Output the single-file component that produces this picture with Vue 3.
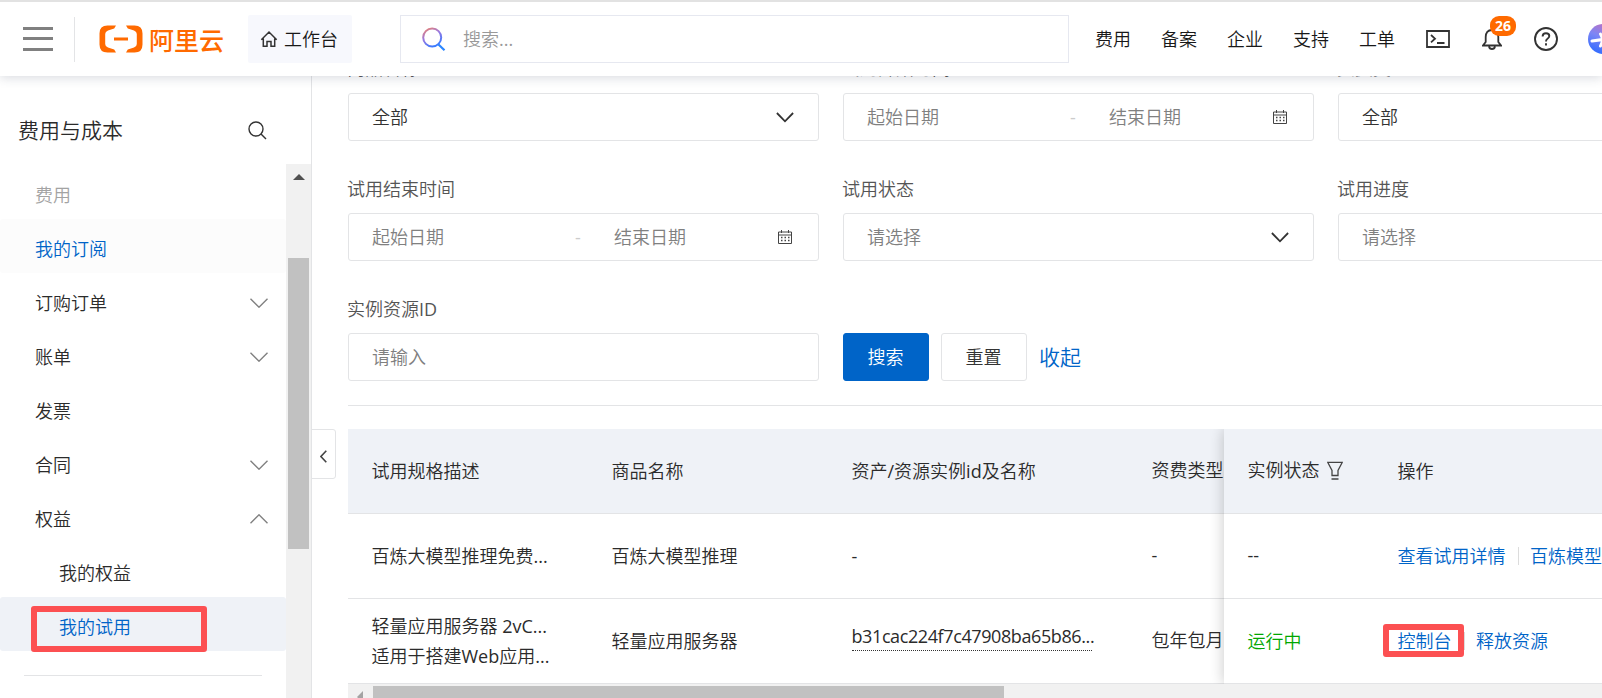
<template>
  <div class="console">
    <header class="topbar">
      <div class="menu-btn"><i></i><i></i><i></i></div>
      <div class="brand">
        <svg width="44" height="28" viewBox="0 0 44 28">
          <path
            d="M17 .5H8.500Q.5.5.5 8.500V19.500Q.5 27.500 8.500 27.500H17L15.200 24.500 9 22.600Q6.200 21.600 6.200 19V9Q6.200 6.400 9 5.400L15.200 3.500ZM27 .5H35.500Q43.500.5 43.500 8.500V19.500Q43.500 27.500 35.500 27.500H27L28.800 24.500 35 22.600Q37.800 21.600 37.800 19V9Q37.800 6.400 35 5.400L28.800 3.500ZM15 12.500H29V15.500H15Z"
            fill="#ff6a00"
          />
        </svg>
        <span>阿里云</span>
      </div>
      <div class="workbench">
        <svg width="18" height="18" viewBox="0 0 18 18" fill="none" stroke="#333" stroke-width="1.500">
          <path d="M1.300 9.700 9 2l7.700 7.700M3.300 8.500V16.200H7V11.500H11V16.200H14.700V8.500" />
        </svg>
        <span>工作台</span>
      </div>
      <div class="search">
        <svg width="24" height="24" viewBox="0 0 24 24" fill="none">
          <defs>
            <linearGradient id="lens" x1="0.1" y1="0" x2="0.6" y2="1">
              <stop offset="0" stop-color="#e98273" />
              <stop offset="0.450" stop-color="#9a78e0" />
              <stop offset="1" stop-color="#3a7bff" />
            </linearGradient>
          </defs>
          <circle cx="10.200" cy="10.500" r="9" stroke="url(#lens)" stroke-width="2" />
          <path d="M16.500 17.500 22.500 23.200" stroke="#2b86ff" stroke-width="2.200" />
        </svg>
        <span>搜索...</span>
      </div>
      <nav class="links">
        <a v-for="link in links" :key="link">{{ link }}</a>
      </nav>
      <div class="tools">
        <svg class="terminal" width="24" height="18" viewBox="0 0 24 18" fill="none" stroke="#333" stroke-width="1.800">
          <path d="M1 1H23V17H1ZM5 5 9 8.700 5 12.400M11 13H18.500" />
        </svg>
        <div class="bell">
          <svg width="20" height="22" viewBox="0 0 20 22" fill="none" stroke="#333" stroke-width="1.800">
            <path d="M1 17.500H19L16.300 14V9Q16.300 2 10 2 3.700 2 3.700 9V14ZM7 18.500Q7.500 21 10 21 12.500 21 13 18.500" />
          </svg>
          <b>26</b>
        </div>
        <svg class="help" width="24" height="24" viewBox="0 0 24 24" fill="none" stroke="#333" stroke-width="1.900">
          <circle cx="12" cy="12" r="11" />
          <path d="M8.600 9.600Q8.600 6.300 12 6.300 15.300 6.300 15.300 9.100 15.300 10.600 13.500 11.700 12 12.600 12 14.400M12 16.300V18.500" />
        </svg>
        <svg class="assistant" width="30" height="30" viewBox="0 0 30 30">
          <defs>
            <linearGradient id="orb" x1="0.700" y1="0" x2="0.300" y2="1">
              <stop offset="0" stop-color="#c06fc0" />
              <stop offset="0.450" stop-color="#7d86f5" />
              <stop offset="1" stop-color="#2f6bff" />
            </linearGradient>
          </defs>
          <circle cx="15" cy="15" r="15" fill="url(#orb)" />
          <path d="M4 17 26 14M12.500 10 18 22M19 7 12.500 22" stroke="#fff" stroke-width="3" stroke-linecap="round" />
        </svg>
      </div>
    </header>

    <div class="body">
      <aside class="sidebar">
        <div class="side-title">
          <span>费用与成本</span>
          <svg width="19" height="19" viewBox="0 0 19 19" fill="none" stroke="#333" stroke-width="1.400">
            <circle cx="8" cy="8" r="7" />
            <path d="M13 13 18 18" />
          </svg>
        </div>
        <div class="side-scroll">
          <div class="menu">
            <div v-for="item in menu" :key="item.text" class="menu-item" :class="item.type">
              <span>{{ item.text }}</span>
              <svg v-if="item.arrow" :class="item.arrow" width="18" height="10" viewBox="0 0 18 10" fill="none" stroke="#808080" stroke-width="1.400">
                <path d="M.5.7 9 9.200 17.500.7" />
              </svg>
              <i v-if="item.type === 'sub active'" class="mark"></i>
            </div>
            <div class="menu-line"></div>
          </div>
          <div class="v-scroll">
            <i class="up"></i>
            <div class="v-thumb"></div>
          </div>
        </div>
      </aside>

      <main class="content">
        <div class="collapse">
          <svg width="7" height="13" viewBox="0 0 7 13" fill="none" stroke="#444" stroke-width="1.600">
            <path d="M6.300.7.900 6.500 6.300 12.300" />
          </svg>
        </div>
        <div class="filters">
          <div v-for="field in fields" :key="field.label" class="field">
            <label>{{ field.label }}<em v-if="field.suffix">{{ field.suffix }}</em></label>
            <div class="control" :class="field.kind">
              <template v-if="field.kind === 'range'">
                <span class="start">起始日期</span>
                <span class="dash">-</span>
                <span class="end">结束日期</span>
                <svg width="14" height="14" viewBox="0 0 14 14" fill="none" stroke="#444" stroke-width="1">
                  <path d="M.5 2H13.500V13.500H.5ZM.5 5H13.500M3.500 0V3M10.500 0V3" />
                  <path d="M3 7.500H11.500M3 10.500H11.500" stroke-width="1.400" stroke-dasharray="1.500 2" />
                </svg>
              </template>
              <template v-else>
                <span :class="{ filled: field.value === '全部' }">{{ field.value }}</span>
                <svg v-if="field.kind === 'select'" width="18" height="11" viewBox="0 0 18 11" fill="none" stroke="#333" stroke-width="1.800">
                  <path d="M.9 1 9 9.300 17.100 1" />
                </svg>
              </template>
            </div>
          </div>
          <div class="actions">
            <button class="primary">搜索</button>
            <button>重置</button>
            <a>收起</a>
          </div>
        </div>

        <div class="table">
          <div class="scroll-cols">
            <div class="row head">
              <div>试用规格描述</div>
              <div>商品名称</div>
              <div>资产/资源实例<em>id</em>及名称</div>
              <div class="raised">资费类型</div>
            </div>
            <div v-for="row in rows" :key="row.product" class="row">
              <div class="desc"><p v-for="line in row.desc" :key="line">{{ line }}</p></div>
              <div>{{ row.product }}</div>
              <div><span :class="{ asset: row.asset !== '-' }">{{ row.asset }}</span></div>
              <div class="raised">{{ row.charge }}</div>
            </div>
          </div>
          <div class="fixed-cols">
            <div class="row head">
              <div class="raised">
                实例状态
                <svg width="16" height="19" viewBox="0 0 16 19" fill="none" stroke="#444" stroke-width="1.300">
                  <path d="M.7 1.300H15.300L11 9.500V14.500H5V9.500ZM4.500 18H11.500" />
                </svg>
              </div>
              <div>操作</div>
            </div>
            <div v-for="row in rows" :key="row.product" class="row">
              <div :class="row.status === '--' ? 'raised' : 'running'">{{ row.status }}</div>
              <div class="ops">
                <a>{{ row.ops[0] }}<i v-if="row.ops[0] === '控制台'" class="mark"></i></a>
                <i class="sep"></i>
                <a>{{ row.ops[1] }}</a>
              </div>
            </div>
          </div>
        </div>
        <div class="h-scroll">
          <i class="left"></i>
          <div class="h-thumb"></div>
        </div>
      </main>
    </div>
  </div>
</template>

<script setup>
const links = ['费用', '备案', '企业', '支持', '工单'];

const menu = [
  { text: '费用', type: 'group' },
  { text: '我的订阅', type: 'hover' },
  { text: '订购订单', arrow: 'down' },
  { text: '账单', arrow: 'down' },
  { text: '发票' },
  { text: '合同', arrow: 'down' },
  { text: '权益', arrow: 'flip' },
  { text: '我的权益', type: 'sub' },
  { text: '我的试用', type: 'sub active' },
];

const fields = [
  { label: '商品名称', kind: 'select', value: '全部' },
  { label: '试用开始时间', kind: 'range' },
  { label: '资费类型', kind: 'select', value: '全部' },
  { label: '试用结束时间', kind: 'range' },
  { label: '试用状态', kind: 'select', value: '请选择' },
  { label: '试用进度', kind: 'select', value: '请选择' },
  { label: '实例资源', suffix: 'ID', kind: 'input', value: '请输入' },
];

const rows = [
  {
    desc: ['百炼大模型推理免费...'],
    product: '百炼大模型推理',
    asset: '-',
    charge: '-',
    status: '--',
    ops: ['查看试用详情', '百炼模型广场'],
  },
  {
    desc: ['轻量应用服务器 2vC...', '适用于搭建Web应用...'],
    product: '轻量应用服务器',
    asset: 'b31cac224f7c47908ba65b86...',
    charge: '包年包月',
    status: '运行中',
    ops: ['控制台', '释放资源'],
  },
];
</script>

<style>
body {
  overflow: hidden;
}
</style>

<style scoped>
* {
  box-sizing: border-box;
}
.console {
  height: 698px;
  overflow: hidden;
  display: flex;
  flex-direction: column;
  background: #fff;
  color: #2b2b2b;
  font: 400 18px/28px "Open Sans", "Noto Sans CJK SC DemiLight", "Noto Sans CJK SC", sans-serif;
}
svg {
  display: block;
  flex: none;
}
p {
  margin: 0;
}

/* 顶栏 */
.topbar {
  position: relative;
  z-index: 5;
  flex: none;
  height: 76px;
  display: flex;
  align-items: center;
  border-top: 2px solid #e2e2e2;
  background: #fff;
  box-shadow: 0 2px 10px rgba(50, 60, 90, 0.18);
  color: #181818;
  white-space: nowrap;
}
.topbar > * {
  flex: none;
}
.menu-btn {
  width: 75px;
  height: 45px;
  padding: 10px 0 11px 23px;
  display: flex;
  flex-direction: column;
  justify-content: space-between;
  border-right: 1px solid #e3e4e6;
}
.menu-btn i {
  width: 30px;
  height: 3px;
  background: #808080;
}
.brand {
  width: 149px;
  margin-left: 24px;
  display: flex;
  align-items: center;
  gap: 6px;
  color: #ff6a00;
  font-family: "Noto Sans CJK SC", sans-serif;
  font-size: 25px;
  font-weight: 500;
}
.workbench {
  width: 104px;
  height: 48px;
  padding-left: 12px;
  display: flex;
  align-items: center;
  gap: 6px;
  border-radius: 2px;
  background: #f7f8fd;
}
.search {
  width: 669px;
  height: 48px;
  margin-left: 48px;
  padding-left: 21px;
  display: flex;
  align-items: center;
  gap: 17px;
  border: 1px solid #e6e8f0;
  color: #999;
}
.links {
  margin-left: 26px;
  display: flex;
  gap: 30px;
}
.tools {
  display: flex;
  align-items: center;
}
.terminal {
  margin-left: 31px;
}
.bell {
  position: relative;
  margin: 0 32px;
}
.bell b {
  position: absolute;
  left: 8px;
  top: -12px;
  width: 26px;
  height: 20px;
  border-radius: 9px;
  background: #ff6a00;
  color: #fff;
  font-size: 14px;
  font-weight: 700;
  line-height: 20px;
  text-align: center;
}
.assistant {
  margin-left: 30px;
}

/* 侧边栏 */
.body {
  flex: 1;
  min-height: 0;
  display: flex;
}
.sidebar {
  flex: none;
  width: 312px;
  display: flex;
  flex-direction: column;
  border-right: 1px solid #e3e4e6;
}
.side-title {
  height: 88px;
  padding: 20px 44px 0 18px;
  display: flex;
  align-items: center;
  justify-content: space-between;
  font-size: 21px;
}
.side-scroll {
  flex: 1;
  display: flex;
}
.menu {
  width: 286px;
  padding-top: 1px;
}
.menu-item {
  position: relative;
  height: 54px;
  padding: 6px 18px 0 35px;
  display: flex;
  align-items: center;
  justify-content: space-between;
  border-radius: 3px;
}
.menu-item.group {
  color: #a3a3a3;
}
.menu-item.hover {
  background: #fcfcfc;
  color: #0064c8;
}
.menu-item.sub {
  padding-left: 59px;
}
.menu-item.active {
  background: #eff2f7;
  color: #0064c8;
}
.flip {
  transform: rotate(180deg);
}
.mark {
  position: absolute;
  border: 6px solid #fc5052;
  border-radius: 3px;
}
.menu-item .mark {
  left: 31px;
  top: 9px;
  width: 176px;
  height: 46px;
}
.menu-line {
  height: 1px;
  margin: 24px 24px 0;
  background: #e3e4e6;
}
.v-scroll {
  width: 25px;
  padding: 10px 2px 0;
  background: #f1f1f1;
}
.up {
  display: block;
  width: 0;
  margin: 0 auto 78px 5px;
  border: 6px solid transparent;
  border-top: 0;
  border-bottom-color: #505050;
}
.v-thumb {
  height: 291px;
  background: #c1c1c1;
}

/* 筛选区 */
.content {
  position: relative;
  flex: 1;
  min-width: 0;
  padding-left: 36px;
  overflow: hidden;
}
.collapse {
  position: absolute;
  left: -1px;
  top: 353px;
  width: 25px;
  height: 50px;
  display: flex;
  align-items: center;
  justify-content: center;
  padding-top: 4px;
  border: 1px solid #e3e4e6;
  border-radius: 0 3px 3px 0;
}
.filters {
  width: 1461px;
  height: 353px;
  margin-top: -23px;
  padding-bottom: 24px;
  display: grid;
  grid-template-columns: repeat(3, 471px);
  grid-auto-rows: 88px;
  gap: 32px 24px;
  border-bottom: 1px solid #e3e4e6;
}
.field label {
  display: block;
  height: 40px;
  margin-left: -1px;
  padding-top: 2px;
  color: #555;
}
.field:nth-child(-n + 3) label {
  padding-top: 1px;
}
.control {
  height: 48px;
  padding: 0 24px 0 23px;
  display: flex;
  align-items: center;
  justify-content: space-between;
  border: 1px solid #e3e4e6;
  border-radius: 3px;
  color: #808080;
}
.control.range {
  padding-right: 26px;
}
.control .filled {
  color: #333;
}
.start {
  width: 203px;
}
.dash {
  width: 39px;
  color: #ccc;
}
.end {
  flex: 1;
}
.actions {
  padding-top: 40px;
  display: flex;
  align-items: center;
  gap: 12px;
}
button {
  width: 86px;
  height: 48px;
  padding: 0 1px 0 0;
  border: 1px solid #e3e4e6;
  border-radius: 3px;
  background: #fff;
  color: #333;
  font: inherit;
}
button.primary {
  border-color: #0064c8;
  background: #0064c8;
  color: #fff;
}
a {
  color: inherit;
}
.actions a {
  color: #0064c8;
  font-size: 21px;
}

/* 表格 */
.table {
  width: 1400px;
  margin-top: 23px;
  display: flex;
}
.scroll-cols {
  width: 876px;
  overflow: hidden;
}
.fixed-cols {
  position: relative;
  width: 524px;
  background: #fff;
  box-shadow: 0 0 14px rgba(0, 0, 0, 0.22);
  clip-path: inset(0 0 0 -14px);
}
.row {
  height: 85px;
  display: grid;
  grid-template-columns: 240px 240px 300px 120px;
  align-items: center;
  border-bottom: 1px solid #e3e4e6;
  white-space: nowrap;
}
.row > div {
  padding-left: 24px;
  text-indent: -0.5px;
}
.fixed-cols .row {
  grid-template-columns: 150px 1fr;
}
.head {
  background: #eff2f7;
}
.row .desc {
  line-height: 30px;
}
.raised {
  display: flex;
  align-items: center;
  gap: 7px;
  margin-top: -2px;
}
em {
  font-style: normal;
  font-weight: 500;
}
.asset {
  display: block;
  width: 240px;
  height: 25px;
  margin-bottom: 6px;
  border-bottom: 1px dotted #333;
  line-height: 21px;
  letter-spacing: -0.4px;
}
.running {
  color: #00a700;
}
.ops {
  display: flex;
  align-items: center;
  color: #0064c8;
}
.ops a {
  position: relative;
}
.sep {
  width: 1px;
  height: 18px;
  margin: 0 12px;
  background: #dcdcdc;
}
.ops .mark {
  left: -15px;
  top: -3px;
  width: 81px;
  height: 33px;
}
.h-scroll {
  height: 25px;
  padding-top: 2px;
  display: flex;
  background: #f1f1f1;
}
.left {
  width: 0;
  height: 0;
  margin: 5px 10px 0 9px;
  border: 6px solid transparent;
  border-left: 0;
  border-right-color: #a3a3a3;
}
.h-thumb {
  width: 631px;
  background: #c1c1c1;
}
</style>
